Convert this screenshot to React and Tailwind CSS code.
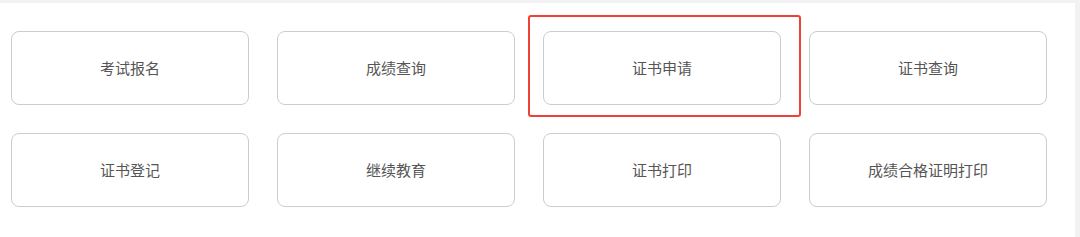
import React from "react";

const items = [
  "考试报名",
  "成绩查询",
  "证书申请",
  "证书查询",
  "证书登记",
  "继续教育",
  "证书打印",
  "成绩合格证明打印",
];

export default function App() {
  return (
    <div
      className="w-[1080px] h-[237px] bg-white flex flex-col overflow-hidden"
      style={{ fontFamily: '"Noto Sans CJK SC", "Noto Sans", sans-serif' }}
    >
      <div className="h-[3px] bg-[#f2f2f2] shrink-0" />
      <div className="flex flex-1">
        <div className="flex-1 pl-[11px] pt-[28px]">
          <div className="grid grid-cols-[repeat(4,238px)] gap-x-[28px] gap-y-[28px]">
            {items.map((t, i) => (
              <div key={t} className="relative">
                {i === 2 && (
                  <div className="absolute left-[-15px] top-[-16px] w-[273px] h-[102px] border-2 border-[#ef4136] rounded-[3px] pointer-events-none" />
                )}
                <div className="h-[74px] border border-[#cccccc] rounded-[8px] bg-white flex items-center justify-center text-[15px] text-[#555555]">
                  {t}
                </div>
              </div>
            ))}
          </div>
        </div>
        <div className="w-[5px] bg-[#f2f2f2] shrink-0" />
      </div>
    </div>
  );
}
